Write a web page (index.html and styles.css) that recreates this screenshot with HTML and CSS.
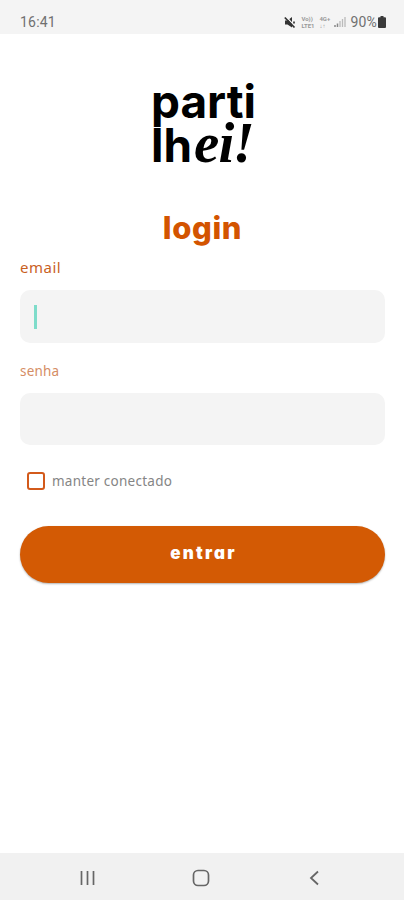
FILE: index.html
```
<!DOCTYPE html>
<html lang="pt-BR">
<head>
<meta charset="utf-8">
<meta name="viewport" content="width=device-width, initial-scale=1">
<title>partilhei! – login</title>
<link rel="stylesheet" href="styles.css">
</head>
<body>
<div class="screen">
  <header class="status">
    <span class="time">16:41</span>
    <div class="indicators">
      <svg class="mute" width="12" height="13" viewBox="0 0 12 13"><path d="M1 4.500h2.500L8 1v10.500L3.500 8.500H1z" fill="#333"/><path d="M2 .5l10 11" stroke="#f4f4f4" stroke-width="1.200"/><path d="M.8 1.500L10.500 11.500M10 5.500v2" stroke="#333" stroke-width="1.700"/></svg>
      <span class="net"><span>Vo))</span><span>LTE1</span></span>
      <span class="net data"><span>4G+</span><span>↓↑</span></span>
      <svg class="signal" width="12" height="12" viewBox="0 0 12 12"><path d="M1 9v2M3.500 7.500V11" stroke="#888" stroke-width="1.500"/><path d="M6 5v6M8.500 3v8M11 1v10" stroke="#bbb" stroke-width="1.300"/></svg>
      <span class="percent">90%</span>
      <svg class="battery" width="8" height="12" viewBox="0 0 8 12"><path d="M2.500 0h3v1.200H7q1 0 1 1V11q0 1-1 1H1q-1 0-1-1V2.200q0-1 1-1h1.500z" fill="#3a3a3a"/></svg>
    </div>
  </header>
  <main class="content">
    <svg class="logo" width="110" height="90" viewBox="0 0 110 90" role="img" aria-label="partilhei!">
      <text class="sans" x="0" y="40" textLength="105" lengthAdjust="spacingAndGlyphs">parti</text>
      <text class="sans" x="0" y="84" textLength="41" lengthAdjust="spacingAndGlyphs">lh</text>
      <text class="serif" x="43 67.500 81.500" y="83.500">ei!</text>
    </svg>
    <h1 class="title">login</h1>
    <form class="form">
      <label class="label email">email</label>
      <div class="field first"><i class="caret"></i></div>
      <label class="label senha">senha</label>
      <div class="field second"></div>
      <div class="remember"><span class="box"></span><span class="remember-text">manter conectado</span></div>
      <button class="submit" type="button">entrar</button>
    </form>
  </main>
  <nav class="nav">
    <svg width="16" height="16" viewBox="0 0 16 16"><path d="M1.500 1v14M7.500 1v14M13.500 1v14" stroke="#666" stroke-width="1.700"/></svg>
    <svg class="home" width="18" height="18" viewBox="0 0 18 18"><rect x="1.500" y="1.500" width="15" height="15" rx="4.500" fill="none" stroke="#666" stroke-width="1.700"/></svg>
    <svg width="12" height="16" viewBox="0 0 12 16"><path d="M10 1.500L3 8l7 6.500" fill="none" stroke="#666" stroke-width="1.800"/></svg>
  </nav>
</div>
</body>
</html>
```
FILE: styles.css
```
* { box-sizing: border-box; }
body { margin: 0; background: #fff; font-family: "Noto Sans", sans-serif; }
.screen { display: flex; flex-direction: column; width: 404px; height: 900px; overflow: hidden; }
.status { display: flex; justify-content: space-between; align-items: center; height: 34px; padding: 10px 18px 0 20px; background: #f4f4f4; color: #707070; font: 14px/20px Roboto, sans-serif; }
.time { letter-spacing: .2px; }
.indicators { display: flex; align-items: center; }
.net { display: flex; flex-direction: column; width: 15px; margin-left: 4px; font: bold 6px/7px Roboto, sans-serif; color: #999; }
.data { width: 14px; margin-left: 3px; }
.signal { margin-left: 1px; }
.percent { margin-left: 4px; letter-spacing: .2px; }
.battery { margin-left: 1px; }
.mute { margin-right: 1px; }
.content { display: flex; flex-direction: column; flex: 1; padding: 0 19px 0 20px; }
.logo { display: block; margin: 44px 0 0 131px; overflow: visible; }
.sans { font: 650 46px Inter, sans-serif; fill: #000; }
.serif { font: italic 700 57px "Liberation Serif", serif; fill: #000; }
.title { margin: 38px 0 0; height: 44px; text-align: center; font: 800 31px/44px Inter, sans-serif; letter-spacing: .6px; color: #d35400; }
.form { display: flex; flex-direction: column; }
.label { display: block; color: #c9611f; }
.email { margin-top: 6px; font-size: 15px; line-height: 22px; letter-spacing: .5px; }
.senha { margin-top: 18px; font-size: 13.500px; line-height: 20px; letter-spacing: .2px; color: #d58d65; }
.field { display: flex; align-items: center; border-radius: 10px; background: #f4f4f4; }
.first { height: 53px; margin-top: 12px; padding-left: 14px; }
.second { height: 52px; margin-top: 12px; }
.caret { width: 3px; height: 24px; background: #7edcca; }
.remember { display: flex; align-items: center; height: 20px; margin-top: 26px; padding-left: 7px; }
.box { width: 18px; height: 18px; border: 2px solid #d35a1b; border-radius: 3px; }
.remember-text { margin-left: 7px; font-size: 13.500px; line-height: 20px; letter-spacing: .25px; color: #858585; }
.submit { height: 57px; margin-top: 35px; padding: 0 0 4px 2px; border: 0; border-radius: 29px; background: #d35a04; box-shadow: 0 1px 2px rgba(0,0,0,.3); color: #fff; font: 900 17px/24px Inter, sans-serif; font-feature-settings: "cv11"; letter-spacing: 2.200px; }
.nav { display: flex; justify-content: space-between; align-items: center; height: 47px; padding: 2px 84px 0 80px; background: #f1f1f1; }
.home { margin-right: 2px; }
```
